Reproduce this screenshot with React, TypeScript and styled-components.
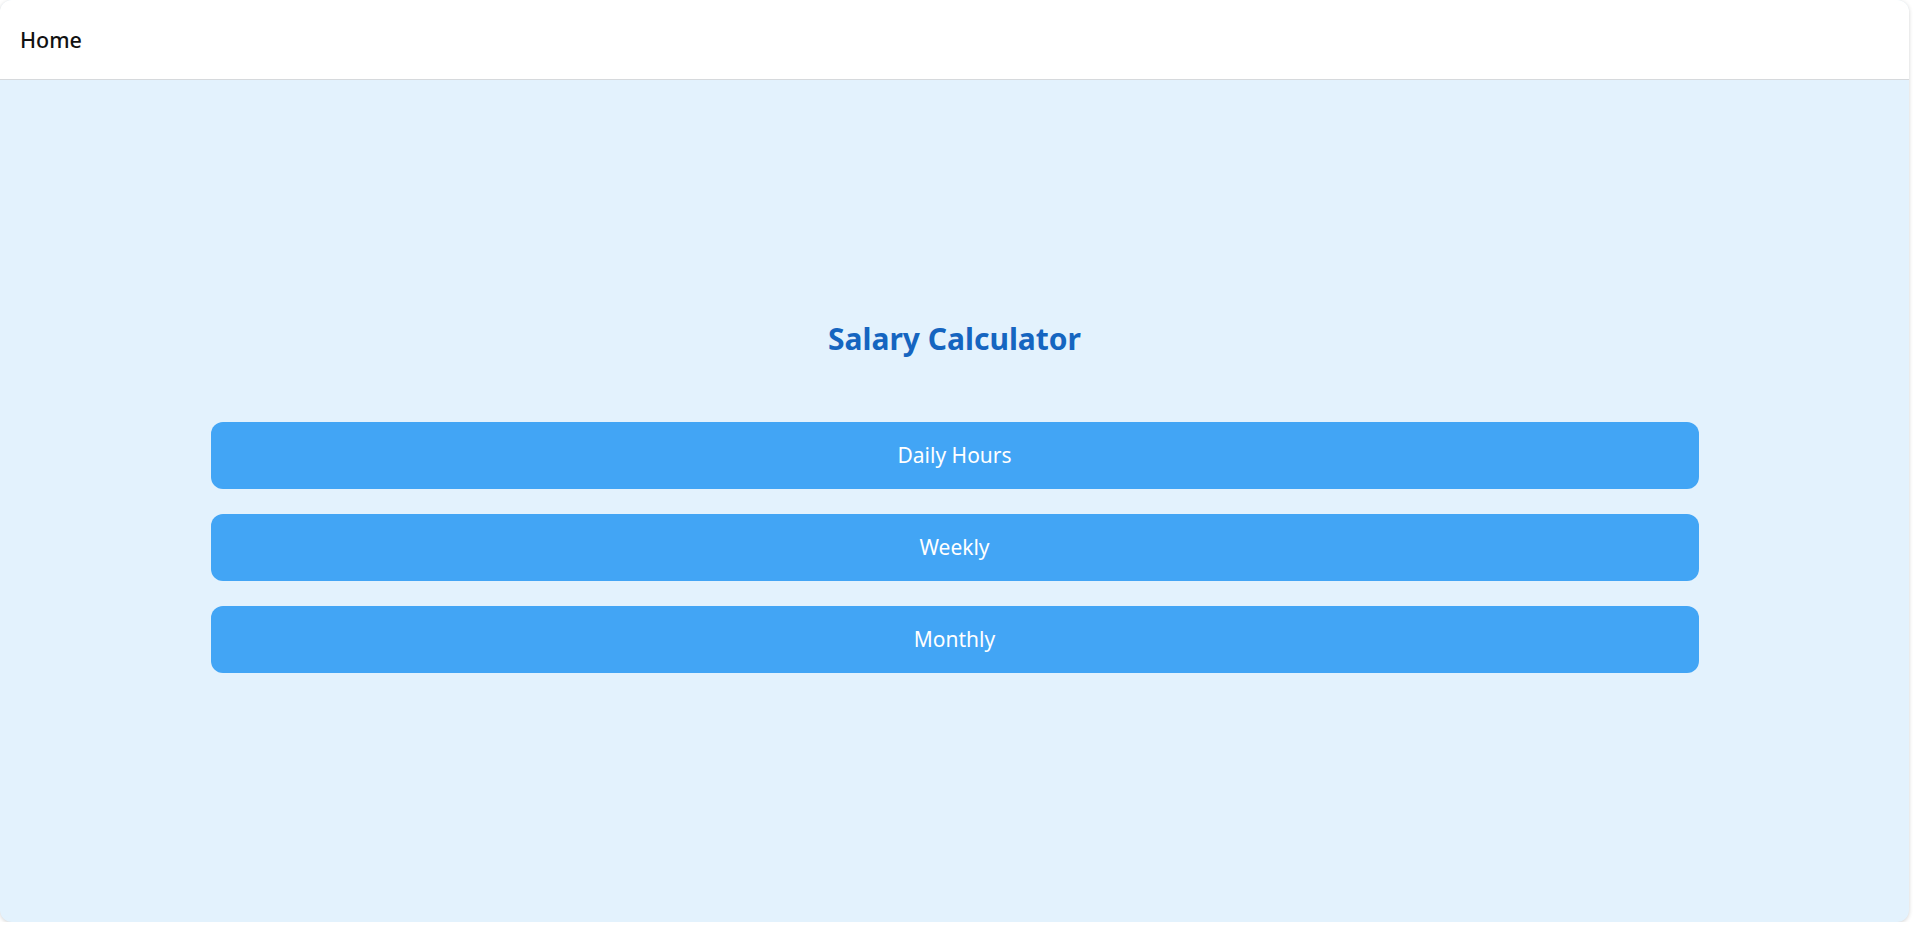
import React from "react";
import styled, { createGlobalStyle } from "styled-components";

const Global = createGlobalStyle`
  html, body { margin: 0; padding: 0; background: #ffffff; }
  body { font-family: "Noto Sans", "Open Sans", sans-serif; }
`;

const Card = styled.div`
  width: 1909px;
  height: 922px;
  display: flex;
  flex-direction: column;
  border-radius: 12px;
  overflow: hidden;
  box-shadow: 0 1px 4px rgba(0, 0, 0, 0.18);
  background: #e3f2fd;
`;

const Header = styled.header`
  height: 79px;
  flex: none;
  display: flex;
  align-items: center;
  padding: 0 20px;
  background: #ffffff;
  border-bottom: 1px solid #d6d9dc;
`;

const HeaderTitle = styled.span`
  font-size: 21.5px;
  font-weight: 500;
  color: #111111;
`;

const Main = styled.main`
  flex: 1;
  display: flex;
  flex-direction: column;
  align-items: center;
  justify-content: center;
  padding-bottom: 12px;
`;

const Title = styled.h1`
  margin: 0 0 63px;
  font-size: 30px;
  font-weight: 700;
  color: #1565c0;
`;

const ButtonList = styled.div`
  width: 1488px;
  display: flex;
  flex-direction: column;
  gap: 25px;
`;

const OptionButton = styled.button`
  height: 67px;
  border: none;
  border-radius: 12px;
  background: #42a5f5;
  color: #ffffff;
  font-family: "Noto Sans", "Open Sans", sans-serif;
  font-size: 21px;
  cursor: pointer;
`;

export default function App() {
  return (
    <>
      <Global />
      <Card>
        <Header>
          <HeaderTitle>Home</HeaderTitle>
        </Header>
        <Main>
          <Title>Salary Calculator</Title>
          <ButtonList>
            <OptionButton>Daily Hours</OptionButton>
            <OptionButton>Weekly</OptionButton>
            <OptionButton>Monthly</OptionButton>
          </ButtonList>
        </Main>
      </Card>
    </>
  );
}
